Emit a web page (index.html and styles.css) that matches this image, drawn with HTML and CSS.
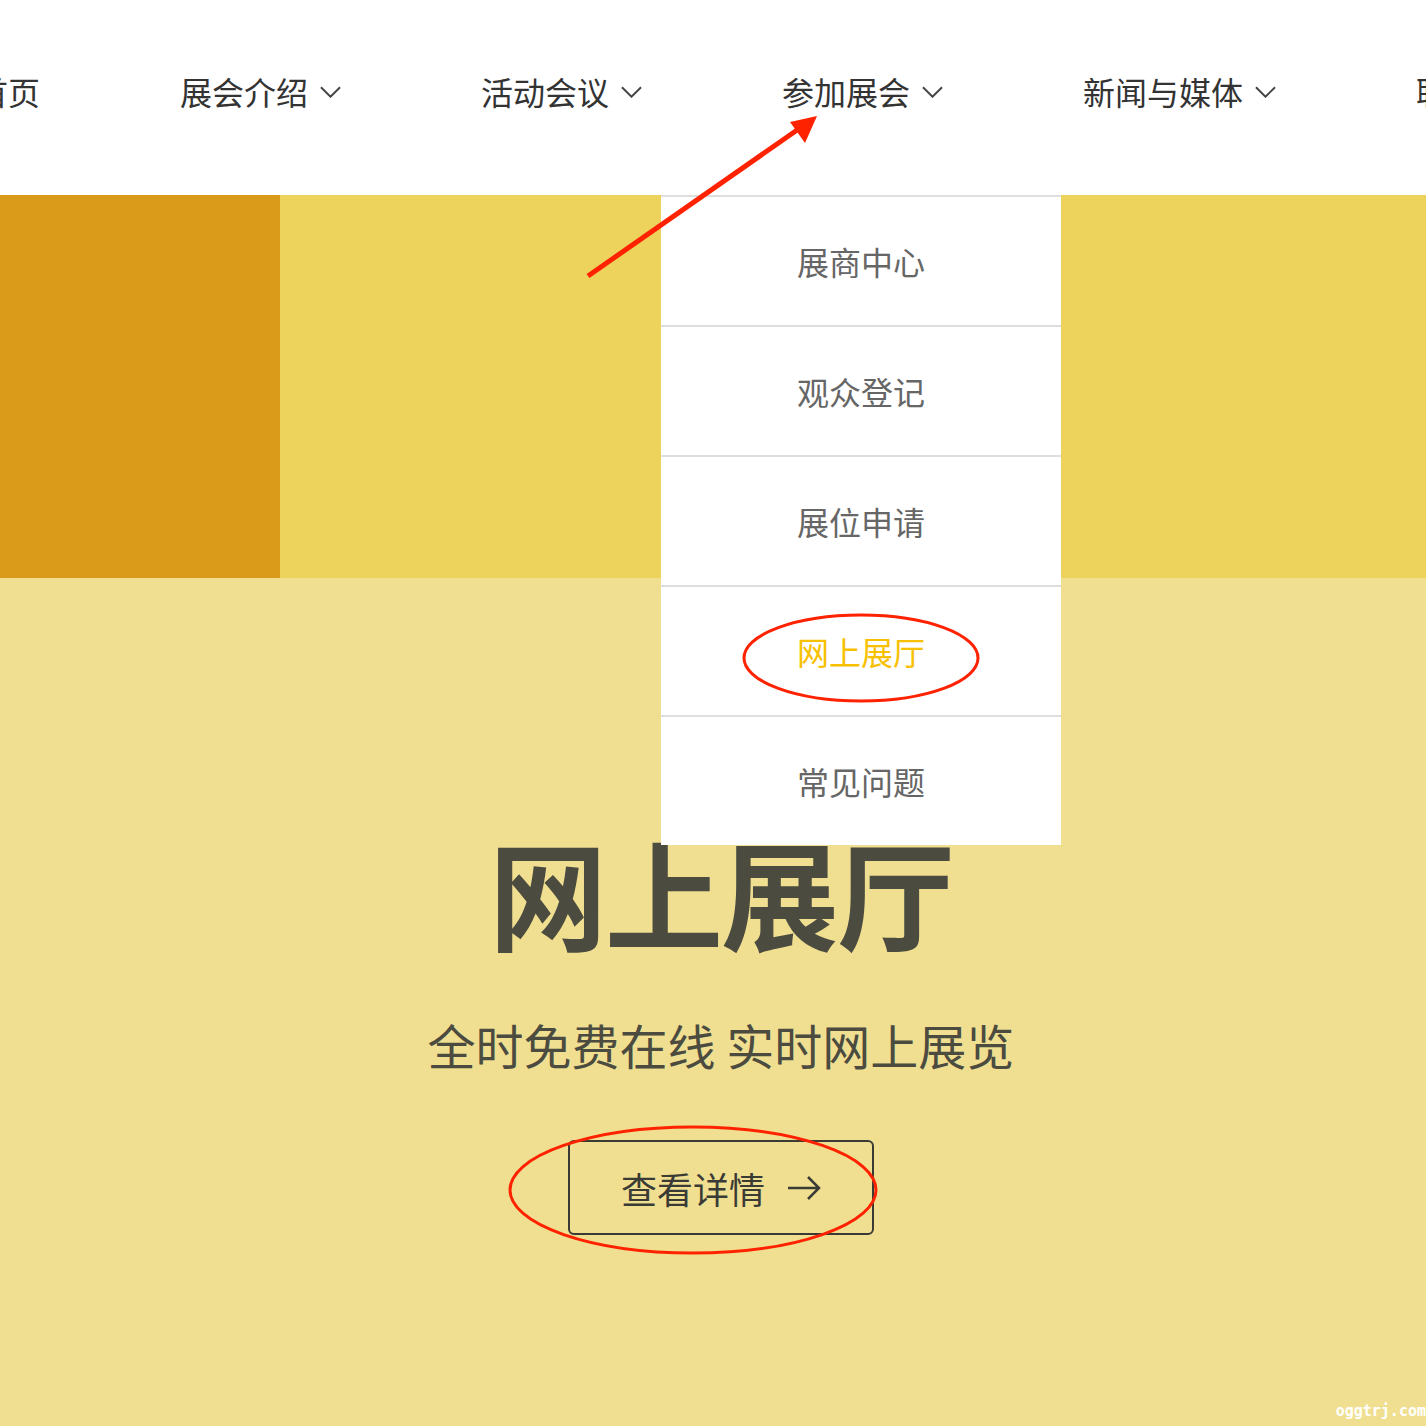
FILE: index.html
```html
<!DOCTYPE html>
<html lang="zh-CN">
<head>
    <meta charset="UTF-8">
    <title>网上展厅</title>
    <link rel="stylesheet" href="styles.css">
</head>
<body>
    <header class="header">
        <nav class="nav">
            <div class="nav-item first">首页</div>
            <div class="nav-item">展会介绍 <svg class="chev" viewBox="0 0 22 12"><path d="M1 1 L11 11 L21 1"/></svg></div>
            <div class="nav-item">活动会议 <svg class="chev" viewBox="0 0 22 12"><path d="M1 1 L11 11 L21 1"/></svg></div>
            <div class="nav-item">参加展会 <svg class="chev" viewBox="0 0 22 12"><path d="M1 1 L11 11 L21 1"/></svg></div>
            <div class="nav-item">新闻与媒体 <svg class="chev" viewBox="0 0 22 12"><path d="M1 1 L11 11 L21 1"/></svg></div>
            <div class="nav-item">联系我们</div>
        </nav>
        <!-- dropdown of 参加展会 -->
        <ul class="dropdown">
            <li>展商中心</li>
            <li>观众登记</li>
            <li>展位申请</li>
            <li class="active">网上展厅</li>
            <li>常见问题</li>
        </ul>
    </header>

    <div class="band">
        <div class="band-dark"></div>
        <div class="band-light"></div>
    </div>

    <section class="hero">
        <h1 class="hero-title">网上展厅</h1>
        <p class="hero-sub">全时免费在线 实时网上展览</p>
        <a class="hero-btn">查看详情 <svg class="btn-arrow" viewBox="0 0 34 24"><path d="M1 12 H32 M21 1 L32 12 L21 23"/></svg></a>
    </section>

    <!-- red marks drawn over the screenshot -->
    <svg class="marks" width="1426" height="1426" viewBox="0 0 1426 1426">
        <line x1="588" y1="276" x2="800" y2="128" stroke="#ff2200" stroke-width="5"/>
        <polygon points="817,116 790,122 805,143" fill="#ff2200"/>
        <ellipse cx="861" cy="658" rx="117" ry="43" fill="none" stroke="#ff2200" stroke-width="3"/>
        <ellipse cx="693" cy="1190" rx="183" ry="63" fill="none" stroke="#ff2200" stroke-width="3"/>
    </svg>

    <div class="watermark">oggtrj.com</div>
</body>
</html>
```

FILE: styles.css
```css
body {
    margin: 0;
    font-family: "Noto Sans CJK SC", "Noto Sans", sans-serif;
    background: #f0df91;
    width: 1426px;
    height: 1426px;
    overflow: hidden;
    position: relative;
}
.header {
    height: 195px;
    background: #fff;
    position: relative;
    z-index: 2;
}
.nav {
    display: flex;
    gap: 140px;
    padding-top: 74px;
    margin-left: -24px;
    white-space: nowrap;
}
.nav-item {
    display: flex;
    align-items: center;
    gap: 12px;
    font-size: 32px;
    line-height: 34px;
    color: #333;
}
.chev {
    width: 21px;
    height: 12px;
    margin-top: 2px;
    fill: none;
    stroke: #444;
    stroke-width: 2;
}
.dropdown {
    position: absolute;
    left: 661px;
    top: 195px;
    width: 400px;
    margin: 0;
    padding: 0;
    list-style: none;
    background: #fff;
    border-top: 2px solid #dedede;
}
.dropdown li {
    height: 128px;
    display: flex;
    align-items: center;
    justify-content: center;
    font-size: 32px;
    color: #666;
    border-bottom: 2px solid #dedede;
}
.dropdown li:last-child {
    border-bottom: none;
}
.dropdown li.active {
    color: #f7c100;
}
.band {
    display: flex;
    height: 383px;
}
.band-dark {
    width: 280px;
    background: #da9a1a;
}
.band-light {
    flex: 1;
    background: #edd35b;
}
.hero {
    display: flex;
    flex-direction: column;
    align-items: center;
    padding-left: 16px;
    color: #4b4b40;
}
.hero-title {
    margin: 248px 0 0;
    font-size: 118px;
    line-height: 130px;
    font-weight: 700;
    letter-spacing: -2px;
}
.hero-sub {
    margin: 60px 0 0;
    font-size: 48px;
    line-height: 56px;
}
.hero-btn {
    margin-top: 68px;
    width: 302px;
    height: 91px;
    border: 2px solid #3b3b35;
    border-radius: 6px;
    display: flex;
    align-items: center;
    justify-content: center;
    gap: 22px;
    font-size: 36px;
    color: #3b3b35;
}
.btn-arrow {
    width: 34px;
    height: 24px;
    fill: none;
    stroke: #3b3b35;
    stroke-width: 2.5;
}
.marks {
    position: absolute;
    left: 0;
    top: 0;
    z-index: 3;
    pointer-events: none;
}
.watermark {
    position: absolute;
    right: 0;
    bottom: 6px;
    font-family: "DejaVu Sans Mono", monospace;
    font-weight: 700;
    font-size: 15px;
    color: #fff;
    z-index: 3;
}
```
